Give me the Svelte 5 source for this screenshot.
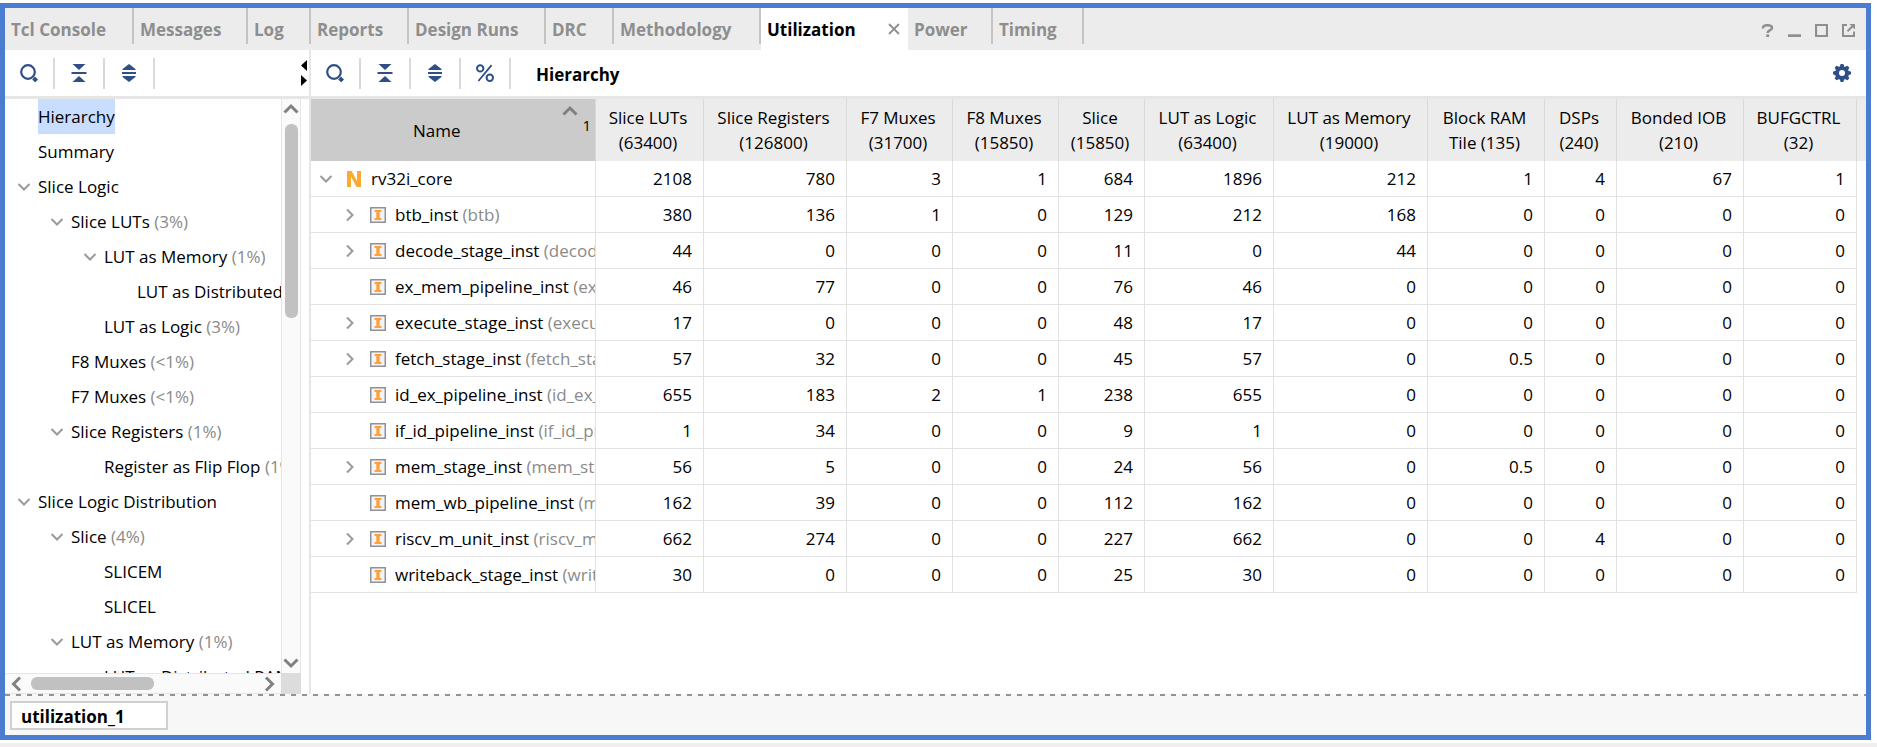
<script>
  const tabs = [
    { label: 'Tcl Console', width: 129 },
    { label: 'Messages', width: 114 },
    { label: 'Log', width: 63 },
    { label: 'Reports', width: 98 },
    { label: 'Design Runs', width: 137 },
    { label: 'DRC', width: 68 },
    { label: 'Methodology', width: 147 },
    { label: 'Utilization', width: 147, active: true },
    { label: 'Power', width: 85 },
    { label: 'Timing', width: 91 }
  ];

  const tree = [
    { label: 'Hierarchy', level: 0, selected: true },
    { label: 'Summary', level: 0 },
    { label: 'Slice Logic', level: 0, open: true },
    { label: 'Slice LUTs', pct: '(3%)', level: 1, open: true },
    { label: 'LUT as Memory', pct: '(1%)', level: 2, open: true },
    { label: 'LUT as Distributed RAM', pct: '(1%)', level: 3 },
    { label: 'LUT as Logic', pct: '(3%)', level: 2 },
    { label: 'F8 Muxes', pct: '(<1%)', level: 1 },
    { label: 'F7 Muxes', pct: '(<1%)', level: 1 },
    { label: 'Slice Registers', pct: '(1%)', level: 1, open: true },
    { label: 'Register as Flip Flop', pct: '(1%)', level: 2 },
    { label: 'Slice Logic Distribution', level: 0, open: true },
    { label: 'Slice', pct: '(4%)', level: 1, open: true },
    { label: 'SLICEM', level: 2 },
    { label: 'SLICEL', level: 2 },
    { label: 'LUT as Memory', pct: '(1%)', level: 1, open: true },
    { label: 'LUT as Distributed RAM', level: 2, open: true }
  ];

  const columns = [
    { top: 'Slice LUTs', bottom: '(63400)', width: 108 },
    { top: 'Slice Registers', bottom: '(126800)', width: 143 },
    { top: 'F7 Muxes', bottom: '(31700)', width: 106 },
    { top: 'F8 Muxes', bottom: '(15850)', width: 106 },
    { top: 'Slice', bottom: '(15850)', width: 86 },
    { top: 'LUT as Logic', bottom: '(63400)', width: 129 },
    { top: 'LUT as Memory', bottom: '(19000)', width: 154 },
    { top: 'Block RAM', bottom: 'Tile (135)', width: 117 },
    { top: 'DSPs', bottom: '(240)', width: 72 },
    { top: 'Bonded IOB', bottom: '(210)', width: 127 },
    { top: 'BUFGCTRL', bottom: '(32)', width: 113 }
  ];

  const rows = [
    { name: 'rv32i_core', root: true, v: [2108, 780, 3, 1, 684, 1896, 212, 1, 4, 67, 1] },
    { name: 'btb_inst', mod: '(btb)', kids: true, v: [380, 136, 1, 0, 129, 212, 168, 0, 0, 0, 0] },
    { name: 'decode_stage_inst', mod: '(decode_stage)', kids: true, v: [44, 0, 0, 0, 11, 0, 44, 0, 0, 0, 0] },
    { name: 'ex_mem_pipeline_inst', mod: '(ex_mem_pipeline)', v: [46, 77, 0, 0, 76, 46, 0, 0, 0, 0, 0] },
    { name: 'execute_stage_inst', mod: '(execute_stage)', kids: true, v: [17, 0, 0, 0, 48, 17, 0, 0, 0, 0, 0] },
    { name: 'fetch_stage_inst', mod: '(fetch_stage)', kids: true, v: [57, 32, 0, 0, 45, 57, 0, 0.5, 0, 0, 0] },
    { name: 'id_ex_pipeline_inst', mod: '(id_ex_pipeline)', v: [655, 183, 2, 1, 238, 655, 0, 0, 0, 0, 0] },
    { name: 'if_id_pipeline_inst', mod: '(if_id_pipeline)', v: [1, 34, 0, 0, 9, 1, 0, 0, 0, 0, 0] },
    { name: 'mem_stage_inst', mod: '(mem_stage)', kids: true, v: [56, 5, 0, 0, 24, 56, 0, 0.5, 0, 0, 0] },
    { name: 'mem_wb_pipeline_inst', mod: '(mem_wb_pipeline)', v: [162, 39, 0, 0, 112, 162, 0, 0, 0, 0, 0] },
    { name: 'riscv_m_unit_inst', mod: '(riscv_m_unit)', kids: true, v: [662, 274, 0, 0, 227, 662, 0, 0, 4, 0, 0] },
    { name: 'writeback_stage_inst', mod: '(writeback_stage)', v: [30, 0, 0, 0, 25, 30, 0, 0, 0, 0, 0] }
  ];
</script>

{#snippet chevron(dir)}
  <svg class="chev" width="14" height="14" viewBox="0 0 14 14" aria-hidden="true">
    <path d={dir === 'down' ? 'M1.5 4 L7 9.5 L12.5 4' : 'M4 1.5 L9.5 7 L4 12.5'} />
  </svg>
{/snippet}

{#snippet arrow(d)}
  <svg width="16" height="16" viewBox="0 0 16 16" aria-hidden="true">
    <path {d} fill="none" stroke="#808080" stroke-width="3" />
  </svg>
{/snippet}

{#snippet basicTools()}
  <button class="tool" aria-label="Search">
    <svg width="18" height="18" viewBox="0 0 18 18">
      <circle cx="8" cy="8" r="6.8" fill="none" stroke="#2f4f88" stroke-width="2.2" />
      <path d="M13.6 14 L16.6 17" stroke="#2f4f88" stroke-width="4" />
    </svg>
  </button>
  <button class="tool" aria-label="Collapse all">
    <svg width="18" height="18" viewBox="0 0 18 18" fill="#2f4f88">
      <path d="M2.5 0 H15.5 L9 6 Z" /><path d="M1.5 8 H16.5 V10 H1.5 Z" /><path d="M2.5 18 H15.5 L9 12 Z" />
    </svg>
  </button>
  <button class="tool" aria-label="Expand all">
    <svg width="18" height="18" viewBox="0 0 18 18" fill="#2f4f88">
      <path d="M9 0 L15.5 5 V6 H2.5 V5 Z" /><path d="M2 8 H16 V10 H2 Z" /><path d="M9 18 L15.5 13 V12 H2.5 V13 Z" />
    </svg>
  </button>
{/snippet}

<div class="page">
  <main class="frame">
    <nav class="tabs">
      {#each tabs as t}
        <div class="tab" class:active={t.active} style="width: {t.width}px">
          <button class="tab-label">{t.label}</button>
          {#if t.active}
            <button class="close" aria-label="Close tab">
              <svg width="12" height="12" viewBox="0 0 12 12"><path d="M1 1 L11 11 M11 1 L1 11" stroke="#8f8f8f" stroke-width="1.8" /></svg>
            </button>
          {/if}
        </div>
      {/each}
      <div class="winctl">
        <button aria-label="Help">
          <svg width="13" height="13" viewBox="0 0 13 13"><path d="M2 4.6 V3.8 C2 1.9 3.8 1.2 6.4 1.2 C9.2 1.2 11 2.1 11 3.9 C11 6.3 6.6 6 6.6 9" fill="none" stroke="#8f8f8f" stroke-width="2.5" /><path d="M5.2 10.4 H8.2 V13 H5.2 Z" fill="#8f8f8f" /></svg>
        </button>
        <button aria-label="Minimize">
          <svg width="13" height="13" viewBox="0 0 13 13"><path d="M0 10.3 H13 V13 H0 Z" fill="#8f8f8f" /></svg>
        </button>
        <button aria-label="Maximize">
          <svg width="13" height="13" viewBox="0 0 13 13"><path d="M1 1 H12 V12 H1 Z" fill="none" stroke="#8f8f8f" stroke-width="2.2" /></svg>
        </button>
        <button aria-label="Float">
          <svg width="13" height="13" viewBox="0 0 13 13" fill="none" stroke="#8f8f8f" stroke-width="2"><path d="M5 1 H1 V12 H12 V7.5" /><path d="M5.5 7.2 L10.5 2.2" stroke-width="2" /><path d="M7.5 0 H13 V5.5 Z" fill="#8f8f8f" stroke="none" /></svg>
        </button>
      </div>
    </nav>

    <div class="body">
      <section class="side">
        <div class="toolbar">
          {@render basicTools()}
          <div class="split-arrows">
            <svg width="6" height="26" viewBox="0 0 6 26"><path d="M6 0 V11 L0 5.5 Z" /><path d="M0 15 V26 L6 20.5 Z" /></svg>
          </div>
        </div>
        <div class="tree-area">
          <ul class="tree">
            {#each tree as n}
              <li style="padding-left: {n.level * 33 + 12}px">
                <span class="twist">{#if n.open}{@render chevron('down')}{/if}</span>
                <span class="node" class:selected={n.selected}>{n.label}{#if n.pct}{' '}<span class="dim">{n.pct}</span>{/if}</span>
              </li>
            {/each}
          </ul>
          <div class="vbar">
            <button aria-label="Scroll up">{@render arrow('M1.5 11.5 L8 5 L14.5 11.5')}</button>
            <div class="vtrack"><div class="vthumb"></div></div>
            <button aria-label="Scroll down">{@render arrow('M1.5 4.5 L8 11 L14.5 4.5')}</button>
          </div>
          <div class="hbar">
            <button aria-label="Scroll left">{@render arrow('M12 1.5 L5.5 8 L12 14.5')}</button>
            <div class="htrack"><div class="hthumb"></div></div>
            <button aria-label="Scroll right">{@render arrow('M4 1.5 L10.5 8 L4 14.5')}</button>
          </div>
          <div class="corner"></div>
        </div>
      </section>

      <section class="main">
        <div class="toolbar">
          {@render basicTools()}
          <button class="tool" aria-label="Show percentage">
            <svg width="18" height="18" viewBox="0 0 18 18" fill="none" stroke="#2f4f88">
              <circle cx="4.2" cy="4.4" r="3.2" stroke-width="2" /><circle cx="13.8" cy="13.8" r="3.2" stroke-width="2" /><path d="M15.6 1.2 L2.4 17" stroke-width="1.8" />
            </svg>
          </button>
          <h1>Hierarchy</h1>
          <button class="gear" aria-label="Settings">
            <svg width="18" height="18" viewBox="-9 -9 18 18">
              <g fill="#2f4f88">
                {#each [0, 45, 90, 135] as a}
                  <path d="M-2.4 -6 L-1.3 -9 H1.3 L2.4 -6 V6 L1.3 9 H-1.3 L-2.4 6 Z" transform="rotate({a})" />
                {/each}
                <circle r="6.8" />
              </g>
              <circle r="3" fill="#fff" />
            </svg>
          </button>
        </div>
        <table>
          <colgroup>
            <col style="width: 285px" />
            {#each columns as c}<col style="width: {c.width}px" />{/each}
            <col />
          </colgroup>
          <thead>
            <tr>
              <th class="name-head">
                <div class="name-inner">
                  <span class="name-text">Name</span>
                  <span class="sort">{@render arrow('M1.5 11.5 L8 5 L14.5 11.5')}</span>
                  <span class="order">1</span>
                </div>
              </th>
              {#each columns as c}<th>{c.top}<br />{c.bottom}</th>{/each}
              <th class="rest" aria-hidden="true"></th>
            </tr>
          </thead>
          <tbody>
            {#each rows as r}
              <tr>
                <td class="name">
                  <div class="cell" class:root={r.root}>
                    <span class="twist">{#if r.root}{@render chevron('down')}{:else if r.kids}{@render chevron('right')}{/if}</span>
                    {#if r.root}
                      <svg class="net" width="14" height="16" viewBox="0 0 14 16"><path d="M0 0 H4.6 L10 10 V0 H14 V16 H9.6 L4 5.8 V16 H0 Z" fill="#fbab30" /></svg>
                    {:else}
                      <svg class="inst" width="16" height="16" viewBox="0 0 16 16"><path d="M.75 .75 H15.25 V15.25 H.75 Z" fill="#f4f4f6" stroke="#8f9196" stroke-width="1.5" /><path d="M4.5 3 H11.5 V5 H9.7 V11 H11.5 V13 H4.5 V11 H6.3 V5 H4.5 Z" fill="#ffa03c" /></svg>
                    {/if}
                    <span class="label">{r.name}{#if r.mod}{' '}<span class="dim">{r.mod}</span>{/if}</span>
                  </div>
                </td>
                {#each r.v as v}<td>{v}</td>{/each}
                <td class="rest"></td>
              </tr>
            {/each}
          </tbody>
        </table>
      </section>
    </div>

    <footer class="sheets">
      <button class="sheet">utilization_1</button>
    </footer>
  </main>
</div>

<style>
  :global(body) {
    margin: 0;
    background: #fff;
  }
  * {
    box-sizing: border-box;
  }
  button {
    font: inherit;
    color: inherit;
    background: none;
    border: 0;
    padding: 0;
    display: flex;
    align-items: center;
    justify-content: center;
  }
  svg {
    display: block;
    flex: none;
  }
  .page {
    height: 100vh;
    display: flex;
    flex-direction: column;
    padding: 3px 6px 3px 0;
    border-bottom: 4px solid #efefef;
    font-family: 'Open Sans', 'Noto Sans', sans-serif;
    font-size: 17px;
    line-height: 25px;
    color: #000;
  }
  .frame {
    flex: 1;
    min-height: 0;
    display: flex;
    flex-direction: column;
    border: 5px solid #4a7ccf;
  }

  .tabs {
    flex: none;
    height: 42px;
    display: flex;
    background: #ececec;
    color: #8e8e8e;
    font-weight: 700;
  }
  .tab {
    flex: none;
    display: flex;
    align-items: center;
    justify-content: space-between;
    padding: 0 8px 0 6px;
    background: linear-gradient(#c4c4c4, #c4c4c4) right top / 2px 36px no-repeat;
  }
  .tab.active {
    background: #fff;
    color: #000;
  }
  .tab-label {
    white-space: nowrap;
  }
  .winctl {
    margin-left: auto;
    padding: 2px 11px 0 0;
    display: flex;
    align-items: center;
    gap: 14px;
  }

  .body {
    flex: 1;
    min-height: 0;
    display: flex;
  }
  .side {
    flex: none;
    width: 306px;
    display: flex;
    flex-direction: column;
    border-right: 2px solid #e6e6e6;
  }
  .main {
    flex: 1;
    min-width: 0;
    overflow: hidden;
  }
  .toolbar {
    flex: none;
    height: 49px;
    display: flex;
    align-items: center;
    border-bottom: 3px solid #e6e6e6;
  }
  .tool {
    width: 50px;
    height: 31px;
    border-right: 2px solid #d9d9d9;
  }
  .split-arrows {
    margin-left: auto;
    padding-right: 2px;
  }
  h1 {
    margin: 0 0 0 25px;
    padding-top: 2px;
    font-size: 17px;
    font-weight: 700;
    line-height: 25px;
  }
  .gear {
    margin-left: auto;
    margin-right: 15px;
  }

  .tree-area {
    flex: 1;
    min-height: 0;
    display: grid;
    grid-template-columns: 276px 20px;
    grid-template-rows: 1fr 21px;
  }
  .tree {
    margin: 0;
    padding: 0;
    min-height: 0;
    list-style: none;
    overflow: hidden;
  }
  .tree li {
    display: flex;
    align-items: center;
    height: 35px;
    white-space: nowrap;
  }
  .twist {
    flex: none;
    width: 21px;
  }
  .chev path {
    fill: none;
    stroke: #9a9a9a;
    stroke-width: 2;
  }
  .node {
    line-height: 35px;
  }
  .selected {
    background: #c9ddff;
  }
  .dim {
    color: #8a8a8a;
  }
  .vbar {
    min-height: 0;
    display: flex;
    flex-direction: column;
    align-items: center;
    padding: 2px 0;
    background: #fafafa;
    border-left: 1px solid #e6e6e6;
    border-right: 1px solid #e6e6e6;
  }
  .vtrack {
    flex: 1;
    width: 13px;
    padding: 7px 0;
  }
  .vthumb {
    height: 37%;
    border-radius: 6px;
    background: #c1c1c1;
  }
  .hbar {
    display: flex;
    align-items: center;
    padding: 0 3px;
    background: #fafafa;
    border-top: 1px solid #e6e6e6;
    border-bottom: 1px solid #e6e6e6;
  }
  .htrack {
    flex: 1;
    padding: 0 7px;
  }
  .hthumb {
    width: 55%;
    height: 13px;
    border-radius: 6px;
    background: #c1c1c1;
  }
  .corner {
    background: #dcdcdc;
  }

  table {
    width: 100%;
    table-layout: fixed;
    border-collapse: separate;
    border-spacing: 0;
  }
  th {
    height: 62px;
    padding: 0 3px 0 0;
    background: #ececec;
    border-right: 1px solid #dadada;
    font-weight: 400;
    text-align: center;
    white-space: nowrap;
  }
  .name-head {
    padding: 0;
    background: #cbcbcb;
  }
  .name-inner {
    display: flex;
    height: 62px;
    padding-right: 4px;
  }
  .name-text {
    flex: 1;
    align-self: center;
  }
  .sort {
    padding-top: 4px;
    margin-right: 4px;
  }
  .order {
    padding-top: 14px;
    font-size: 15px;
  }
  td {
    height: 36px;
    padding: 0 11px 0 0;
    border-right: 1px solid #e2e2e2;
    border-bottom: 1px solid #e2e2e2;
    text-align: right;
    white-space: nowrap;
  }
  .name {
    padding: 0;
    text-align: left;
  }
  th.rest,
  td.rest {
    border: 0;
    padding: 0;
  }
  .cell {
    display: flex;
    align-items: center;
    padding-left: 32px;
    overflow: hidden;
  }
  .cell .twist {
    width: 27px;
  }
  .cell.root {
    padding-left: 8px;
  }
  .cell.root .twist {
    width: 28px;
  }
  .label {
    flex: 1;
    min-width: 0;
    overflow: hidden;
  }
  .net {
    margin-right: 10px;
  }
  .inst {
    margin-right: 9px;
  }

  .sheets {
    flex: none;
    height: 41px;
    padding: 7px 5px 5px;
    background: repeating-linear-gradient(90deg, #939393 0 5px, #f7f7f7 5px 11px) left top / 100% 2px no-repeat #f7f7f7;
  }
  .sheet {
    width: 158px;
    height: 29px;
    justify-content: flex-start;
    padding: 2px 0 0 9px;
    border: 2px solid #d0d0d0;
    background: #fff;
    font-weight: 700;
  }
</style>
